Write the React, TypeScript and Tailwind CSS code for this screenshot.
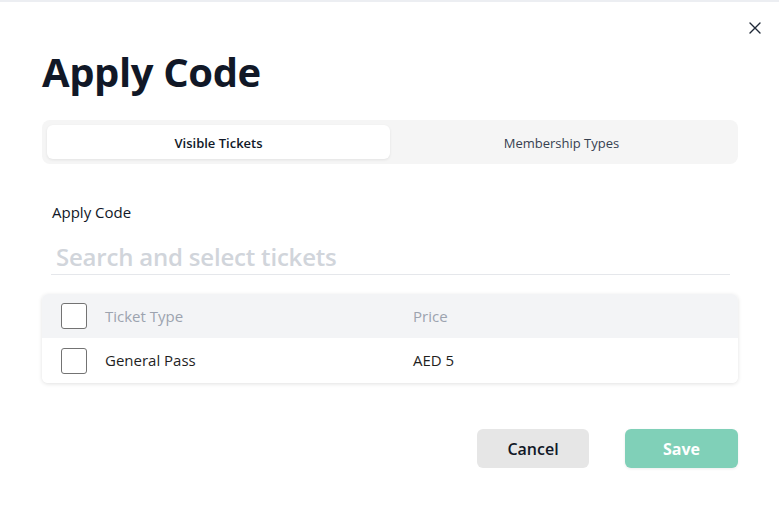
import React from "react";

export default function App() {
  const font = { fontFamily: '"Open Sans", "Noto Sans", Arial, sans-serif' };
  return (
    <div className="w-[779px] h-[512px] bg-white border-t-2 border-[#eceef2] relative" style={font}>
      <button className="absolute right-[17px] top-[19px] w-[14px] h-[14px] flex items-center justify-center text-[#1f2937]">
        <svg width="12" height="12" viewBox="0 0 12 12" fill="none" stroke="currentColor" strokeWidth="1.4" strokeLinecap="round">
          <path d="M1 1L11 11M11 1L1 11" />
        </svg>
      </button>
      <div className="pl-[42px] pr-[41px] pt-[44px]">
        <h1 className="text-[40px] leading-[52px] font-bold text-[#111827] tracking-[-0.4px]">Apply Code</h1>
        <div className="mt-[22px] h-[44px] bg-[#f5f5f5] rounded-[8px] p-[5px] flex">
          <div className="flex-1 bg-white rounded-[6px] shadow-[0_1px_3px_rgba(0,0,0,0.08)] flex items-center justify-center pt-[3px] text-[13px] font-semibold text-[#111827]">
            Visible Tickets
          </div>
          <div className="flex-1 flex items-center justify-center pt-[3px] text-[13px] text-[#374151]">
            Membership Types
          </div>
        </div>
        <div className="mt-[38px] pl-[10px] text-[15px] text-[#111827] leading-[20px]">Apply Code</div>
        <div className="mt-[18px] ml-[9px] mr-[8px] border-b border-[#e5e7eb]">
          <div className="pl-[5px] text-[24px] leading-[34px] text-[#d1d5db] font-semibold tracking-[-0.2px]">Search and select tickets</div>
        </div>
        <div className="mt-[19px] rounded-[6px] shadow-[0_1px_4px_rgba(0,0,0,0.12)] overflow-hidden">
          <div className="h-[44px] bg-[#f3f4f6] flex items-center">
            <div className="ml-[19px] w-[26px] h-[26px] border border-[#737373] rounded-[3px] bg-white" />
            <div className="ml-[18px] w-[308px] text-[15px] text-[#9ca3af]">Ticket Type</div>
            <div className="text-[15px] text-[#9ca3af]">Price</div>
          </div>
          <div className="h-[45px] bg-white flex items-center">
            <div className="ml-[19px] w-[26px] h-[26px] border border-[#737373] rounded-[3px] bg-white" />
            <div className="ml-[18px] w-[308px] text-[15px] text-[#1f1f1f]">General Pass</div>
            <div className="text-[15px] text-[#1f1f1f]">AED 5</div>
          </div>
        </div>
        <div className="mt-[46px] flex justify-end gap-[36px]">
          <button className="w-[112px] h-[39px] rounded-[6px] bg-[#e6e6e6] text-[16px] font-semibold text-[#111827]">Cancel</button>
          <button className="w-[113px] h-[39px] rounded-[6px] bg-[#80d0b8] text-[16px] font-bold text-white shadow-[0_1px_3px_rgba(0,0,0,0.08)]">Save</button>
        </div>
      </div>
    </div>
  );
}
